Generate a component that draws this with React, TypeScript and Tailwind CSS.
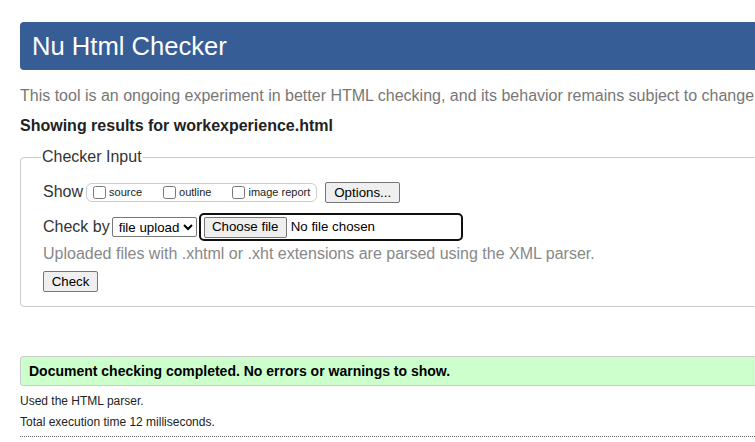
export default function App() {
  return (
    <div className="min-h-[442px] bg-white pl-[20px] pt-[22px] font-['Liberation_Sans',Arial,sans-serif] text-[16px] text-black overflow-hidden">
      <div className="w-[900px]">
        <h1 className="h-[48px] rounded-l-[4px] bg-[#365d95] pl-[12px] text-[25.6px] leading-[48px] text-white">
          Nu Html Checker
        </h1>
        <p className="mt-[17px] whitespace-nowrap leading-[18px] text-[#777]">
          This tool is an ongoing experiment in better HTML checking, and its behavior remains subject to change
        </p>
        <p className="mt-[12px] font-bold leading-[18px] text-[#222]">Showing results for workexperience.html</p>

        <fieldset className="mt-[10px] rounded-l-[4px] border border-[#ccc] pb-[13px] pl-[22px] pt-[11px]">
          <legend className="ml-[-2px] px-[1px] text-[16px] text-[#333]">Checker Input</legend>
          <div className="flex items-center">
            <span className="text-[#333]">Show</span>
            <span className="ml-[3px] flex h-[19px] items-center rounded-[6px] border border-[#ccc] pl-[6px] pr-[6px] text-[11px] text-[#222]">
              <label className="flex items-center">
                <input type="checkbox" className="m-0 h-[13px] w-[13px]" />
                <span className="ml-[3px]">source</span>
              </label>
              <label className="ml-[21px] flex items-center">
                <input type="checkbox" className="m-0 h-[13px] w-[13px]" />
                <span className="ml-[3px]">outline</span>
              </label>
              <label className="ml-[21px] flex items-center">
                <input type="checkbox" className="m-0 h-[13px] w-[13px]" />
                <span className="ml-[3px]">image report</span>
              </label>
            </span>
            <button className="ml-[8px] h-[21px] w-[75px] rounded-[2px] border border-[#767676] bg-[#efefef] text-[13.3px] leading-[19px]">
              Options...
            </button>
          </div>

          <div className="mt-[9px] flex items-center">
            <span className="text-[#333]">Check by</span>
            <select className="ml-[2px] h-[20px] w-[85px] rounded-[2px] border border-[#767676] bg-white pl-[2px] text-[13.3px] leading-[18px]">
              <option>file upload</option>
            </select>
            <div className="ml-[2px] flex h-[28px] w-[264px] items-center rounded-[5px] border-2 border-[#101010] pl-[3px]">
              <span className="flex h-[21px] w-[83px] items-center justify-center rounded-[2px] border border-[#767676] bg-[#efefef] text-[13.3px]">
                Choose file
              </span>
              <span className="ml-[4px] text-[13.3px]">No file chosen</span>
            </div>
          </div>

          <p className="mt-[4px] leading-[18px] text-[#888]">
            Uploaded files with .xhtml or .xht extensions are parsed using the XML parser.
          </p>
          <button className="mt-[8px] h-[21px] w-[55px] rounded-[2px] border border-[#767676] bg-[#efefef] text-[13.3px] leading-[19px]">
            Check
          </button>
        </fieldset>

        <div className="mt-[49px] flex h-[30px] items-center rounded-l-[3px] border border-[#ccc] bg-[#ccffcc] pl-[8px] text-[14px] font-bold text-black">
          Document checking completed. No errors or warnings to show.
        </div>
        <p className="mt-[8px] text-[12px] leading-[14px] text-[#222]">Used the HTML parser.</p>
        <p className="mt-[7px] text-[12px] leading-[14px] text-[#222]">Total execution time 12 milliseconds.</p>
        <div className="mt-[7px] w-[735px] border-t border-dotted border-[#666]" />
      </div>
    </div>
  )
}
